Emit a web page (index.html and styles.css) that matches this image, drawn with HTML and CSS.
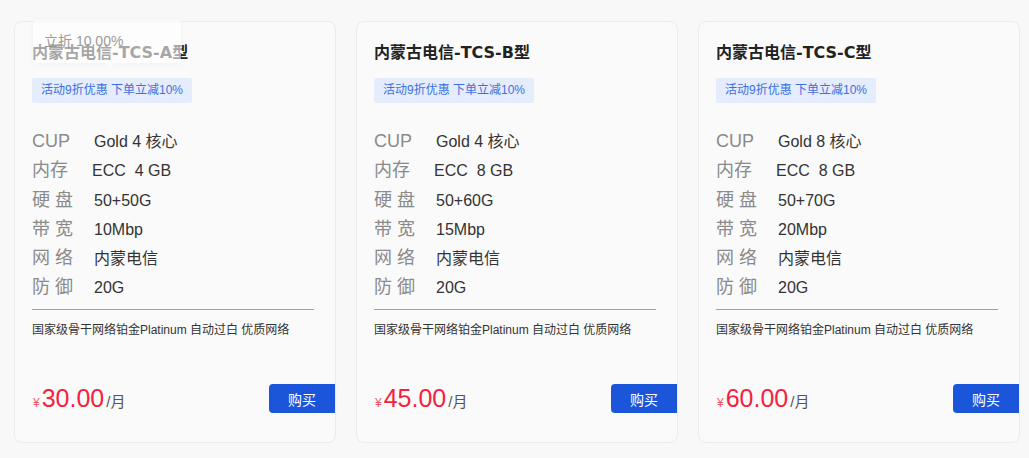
FILE: index.html
```html
<!DOCTYPE html>
<html lang="zh-CN">
<head>
  <meta charset="UTF-8">
  <meta name="viewport" content="width=device-width, initial-scale=1.0">
  <title>内蒙古电信</title>
  <link rel="stylesheet" href="styles.css">
</head>
<body>

  <div class="plans">
    <div class="plan">
      <div class="tip">立折 10.00%</div>
      <h3 class="plan-title">内蒙古电信-TCS-A型</h3>
      <span class="tag">活动9折优惠 下单立减10%</span>
      <ul class="specs">
        <li><span class="k">CUP</span><span class="v">Gold 4 核心</span></li>
        <li><span class="k">内存</span><span class="v v-mem">ECC&nbsp; 4 GB</span></li>
        <li><span class="k">硬 盘</span><span class="v">50+50G</span></li>
        <li><span class="k">带 宽</span><span class="v">10Mbp</span></li>
        <li><span class="k">网 络</span><span class="v">内蒙电信</span></li>
        <li><span class="k">防 御</span><span class="v">20G</span></li>
      </ul>
      <p class="desc">国家级骨干网络铂金Platinum 自动过白 优质网络</p>
      <div class="buy-row">
        <div class="price"><small>¥</small><b>30.00</b><span>/月</span></div>
        <button class="buy">购买</button>
      </div>
    </div>

    <div class="plan">
      <h3 class="plan-title">内蒙古电信-TCS-B型</h3>
      <span class="tag">活动9折优惠 下单立减10%</span>
      <ul class="specs">
        <li><span class="k">CUP</span><span class="v">Gold 4 核心</span></li>
        <li><span class="k">内存</span><span class="v v-mem">ECC&nbsp; 8 GB</span></li>
        <li><span class="k">硬 盘</span><span class="v">50+60G</span></li>
        <li><span class="k">带 宽</span><span class="v">15Mbp</span></li>
        <li><span class="k">网 络</span><span class="v">内蒙电信</span></li>
        <li><span class="k">防 御</span><span class="v">20G</span></li>
      </ul>
      <p class="desc">国家级骨干网络铂金Platinum 自动过白 优质网络</p>
      <div class="buy-row">
        <div class="price"><small>¥</small><b>45.00</b><span>/月</span></div>
        <button class="buy">购买</button>
      </div>
    </div>

    <div class="plan">
      <h3 class="plan-title">内蒙古电信-TCS-C型</h3>
      <span class="tag">活动9折优惠 下单立减10%</span>
      <ul class="specs">
        <li><span class="k">CUP</span><span class="v">Gold 8 核心</span></li>
        <li><span class="k">内存</span><span class="v v-mem">ECC&nbsp; 8 GB</span></li>
        <li><span class="k">硬 盘</span><span class="v">50+70G</span></li>
        <li><span class="k">带 宽</span><span class="v">20Mbp</span></li>
        <li><span class="k">网 络</span><span class="v">内蒙电信</span></li>
        <li><span class="k">防 御</span><span class="v">20G</span></li>
      </ul>
      <p class="desc">国家级骨干网络铂金Platinum 自动过白 优质网络</p>
      <div class="buy-row">
        <div class="price"><small>¥</small><b>60.00</b><span>/月</span></div>
        <button class="buy">购买</button>
      </div>
    </div>
  </div>

</body>
</html>
```

FILE: styles.css
```css
body {
  margin: 0;
  background-color: #f8f8f9;
  font-family: "Liberation Sans", "Noto Sans CJK SC", sans-serif;
  color: #333;
}

.plans {
  display: flex;
  gap: 20px;
  padding: 21px 0 0 14px;
}

.plan {
  position: relative;
  width: 322px;
  height: 422px;
  box-sizing: border-box;
  display: flex;
  flex-direction: column;
  align-items: flex-start;
  padding: 19px 21px 29px 17px;
  background-color: #fafafb;
  border: 1px solid #ebebed;
  border-radius: 8px;
}

.tip {
  position: absolute;
  top: -2px;
  left: 18px;
  width: 148px;
  height: 43px;
  box-sizing: border-box;
  padding: 10px 0 0 11px;
  font-size: 14px;
  color: #9a9a9a;
  background-color: rgba(255, 255, 255, 0.6);
  border-radius: 3px;
  box-shadow: 0 1px 6px rgba(0, 0, 0, 0.04);
  z-index: 5;
}

.tip::after {
  content: "";
  position: absolute;
  left: 72px;
  bottom: -5px;
  border-left: 5px solid transparent;
  border-right: 5px solid transparent;
  border-top: 5px solid rgba(255, 255, 255, 0.6);
}

.plan-title {
  margin: 0;
  font-family: "DejaVu Sans", "Noto Sans CJK SC", sans-serif;
  font-size: 16px;
  line-height: 24px;
  font-weight: bold;
  color: #222;
}

.tag {
  margin-top: 13px;
  padding: 0 9px;
  font-size: 12px;
  line-height: 25px;
  color: #3d6ee0;
  background-color: #e5edfc;
  border-radius: 2px;
}

.specs {
  list-style: none;
  margin: 24px 0 0;
  padding: 0;
  width: 100%;
}

.specs li {
  height: 29.3px;
  line-height: 29.3px;
  white-space: nowrap;
}

.specs .k {
  display: inline-block;
  width: 62px;
  font-size: 18px;
  line-height: 29.3px;
  color: #8a8a8a;
}

.specs .v {
  font-size: 16px;
  line-height: 29.3px;
  color: #333;
}

.specs .v-mem {
  margin-left: -2px;
}

.desc {
  width: 100%;
  margin: 6px 0 0;
  padding-top: 10px;
  border-top: 1px solid #a0a0a0;
  font-size: 12px;
  line-height: 20px;
  color: #333;
}

.buy-row {
  margin-top: auto;
  width: 100%;
  display: flex;
  align-items: center;
  justify-content: space-between;
}

.price {
  display: flex;
  align-items: baseline;
  color: #f5213d;
  padding-left: 1px;
}

.price small {
  font-size: 12px;
  margin-right: 2px;
  color: #f4566c;
}

.price b {
  font-size: 25px;
  font-weight: normal;
}

.price span {
  font-size: 15px;
  color: #555;
  margin-left: 2px;
}

.buy {
  width: 66px;
  height: 29px;
  margin-right: -21px;
  border: none;
  border-radius: 4px 0 0 4px;
  background-color: #1b56da;
  color: #fff;
  font-family: inherit;
  font-size: 14px;
  cursor: pointer;
}
```
